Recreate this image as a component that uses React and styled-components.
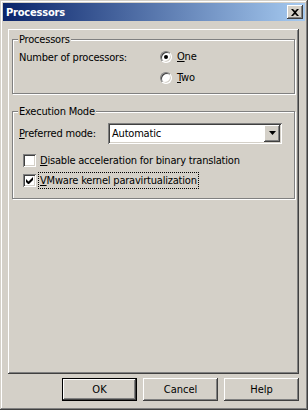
import React from "react"
import styled, { createGlobalStyle } from "styled-components"

const GlobalStyle = createGlobalStyle`
  html, body {
    margin: 0;
    padding: 0;
    background: #d4d0c8;
  }
  * {
    box-sizing: border-box;
  }
`

const raised = `
  background: #d4d0c8;
  box-shadow: inset -1px -1px #404040, inset 1px 1px #ffffff, inset -2px -2px #808080, inset 2px 2px #d4d0c8;
`

const Window = styled.div`
  width: 308px;
  height: 410px;
  padding: 3px;
  display: flex;
  flex-direction: column;
  background: #d4d0c8;
  box-shadow: inset -1px -1px #404040, inset 1px 1px #d4d0c8, inset -2px -2px #808080, inset 2px 2px #ffffff;
  font-family: "DejaVu Sans Condensed", "DejaVu Sans", sans-serif;
  font-size: 11px;
  letter-spacing: -0.2px;
  color: #000;
`

const TitleBar = styled.div`
  height: 18px;
  display: flex;
  align-items: center;
  justify-content: space-between;
  padding: 0 2px 0 3px;
  background: linear-gradient(to right, #0a246a, #a6caf0);
`

const Title = styled.span`
  color: #fff;
  font-weight: bold;
`

const CloseButton = styled.div`
  width: 16px;
  height: 14px;
  display: flex;
  align-items: center;
  justify-content: center;
  ${raised}
`

const Client = styled.div`
  flex: 1;
  display: flex;
  flex-direction: column;
  gap: 4px;
  padding: 8px 6px 6px 5px;
`

const Panel = styled.div`
  flex: 1;
  padding: 2px 4px;
  ${raised}
`

const Group = styled.fieldset`
  margin: ${(p) => p.$top}px 0 0 0;
  padding: 2px 6px 0 6px;
  min-width: 0;
  height: ${(p) => p.$height}px;
  border: 1px solid #808080;
  box-shadow: inset 1px 1px #ffffff, 1px 1px #ffffff;
`

const Legend = styled.legend`
  padding: 0 1px;
  margin-left: -1px;
  background: #d4d0c8;
`

const Row = styled.div`
  display: flex;
  align-items: ${(p) => p.$align || "center"};
  height: ${(p) => p.$height || 20}px;
  margin-bottom: ${(p) => p.$after || 0}px;
`

const FieldLabel = styled.span`
  width: ${(p) => p.$width}px;
  flex: none;
  padding-top: ${(p) => p.$top || 0}px;
`

const RadioList = styled.div`
  display: flex;
  flex-direction: column;
  margin-top: -2px;
`

const RadioItem = styled.label`
  display: flex;
  align-items: center;
  gap: 5px;
  height: 21px;
`

const RadioCircle = styled.span`
  width: 12px;
  height: 12px;
  border-radius: 50%;
  background: #fff;
  border: 1px solid;
  border-color: #808080 #ffffff #ffffff #808080;
  box-shadow: inset 1px 1px #404040, inset -1px -1px #d4d0c8;
  display: flex;
  align-items: center;
  justify-content: center;
  &::after {
    content: "";
    width: 4px;
    height: 4px;
    border-radius: 50%;
    background: ${(p) => (p.$checked ? "#000" : "transparent")};
  }
`

const Select = styled.div`
  width: 174px;
  height: 21px;
  display: flex;
  align-items: center;
  padding: 2px;
  background: #fff;
  box-shadow: inset 1px 1px #808080, inset -1px -1px #ffffff, inset 2px 2px #404040, inset -2px -2px #d4d0c8;
`

const SelectValue = styled.span`
  flex: 1;
  padding-left: 2px;
`

const DropButton = styled.div`
  width: 16px;
  height: 17px;
  display: flex;
  align-items: center;
  justify-content: center;
  ${raised}
`

const CheckRow = styled.label`
  display: flex;
  align-items: center;
  gap: 2px;
  height: 20px;
  padding-left: 4px;
`

const CheckBox = styled.span`
  width: 13px;
  height: 13px;
  flex: none;
  margin-right: 1px;
  background: #fff;
  display: flex;
  align-items: center;
  justify-content: center;
  box-shadow: inset 1px 1px #808080, inset -1px -1px #ffffff, inset 2px 2px #404040, inset -2px -2px #d4d0c8;
`

const CheckText = styled.span`
  padding: 1px 1px;
  outline: ${(p) => (p.$focused ? "1px dotted #000" : "none")};
`

const ButtonRow = styled.div`
  display: flex;
  justify-content: flex-end;
  gap: 6px;
`

const Button = styled.button`
  width: 75px;
  height: 23px;
  font: inherit;
  color: #000;
  border: none;
  padding: 0;
  ${raised}
  ${(p) =>
    p.$default &&
    `box-shadow: inset 0 0 0 1px #000, inset -2px -2px #404040, inset 2px 2px #ffffff, inset -3px -3px #808080;`}
`

const Check = () => (
  <svg width="7" height="7" viewBox="0 0 7 7">
    <path d="M0 2v3l2 2h1l4-4V0L2.5 4.5Z" fill="#000" />
  </svg>
)

export default function App() {
  return (
    <>
      <GlobalStyle />
      <Window>
        <TitleBar>
          <Title>Processors</Title>
          <CloseButton>
            <svg width="8" height="7" viewBox="0 0 8 7">
              <path d="M0 0h2l2 2 2-2h2L5 3.5 8 7H6L4 5 2 7H0l3-3.5Z" fill="#000" />
            </svg>
          </CloseButton>
        </TitleBar>
        <Client>
          <Panel>
            <Group $top={2} $height={61}>
              <Legend>Processors</Legend>
              <Row $align="flex-start" $height={44}>
                <FieldLabel $width={141} $top={3}>
                  Number of processors:
                </FieldLabel>
                <RadioList>
                  <RadioItem>
                    <RadioCircle $checked />
                    <span>
                      <u>O</u>ne
                    </span>
                  </RadioItem>
                  <RadioItem>
                    <RadioCircle />
                    <span>
                      <u>T</u>wo
                    </span>
                  </RadioItem>
                </RadioList>
              </Row>
            </Group>
            <Group $top={11} $height={94}>
              <Legend>Execution Mode</Legend>
              <Row $height={26} $after={4}>
                <FieldLabel $width={89}>
                  <u>P</u>referred mode:
                </FieldLabel>
                <Select>
                  <SelectValue>Automatic</SelectValue>
                  <DropButton>
                    <svg width="7" height="4" viewBox="0 0 7 4">
                      <path d="M0 0h7L3.5 4Z" fill="#000" />
                    </svg>
                  </DropButton>
                </Select>
              </Row>
              <CheckRow>
                <CheckBox />
                <CheckText>
                  <u>D</u>isable acceleration for binary translation
                </CheckText>
              </CheckRow>
              <CheckRow>
                <CheckBox>
                  <Check />
                </CheckBox>
                <CheckText $focused>
                  <u>V</u>Mware kernel paravirtualization
                </CheckText>
              </CheckRow>
            </Group>
          </Panel>
          <ButtonRow>
            <Button $default>OK</Button>
            <Button>Cancel</Button>
            <Button>Help</Button>
          </ButtonRow>
        </Client>
      </Window>
    </>
  )
}
